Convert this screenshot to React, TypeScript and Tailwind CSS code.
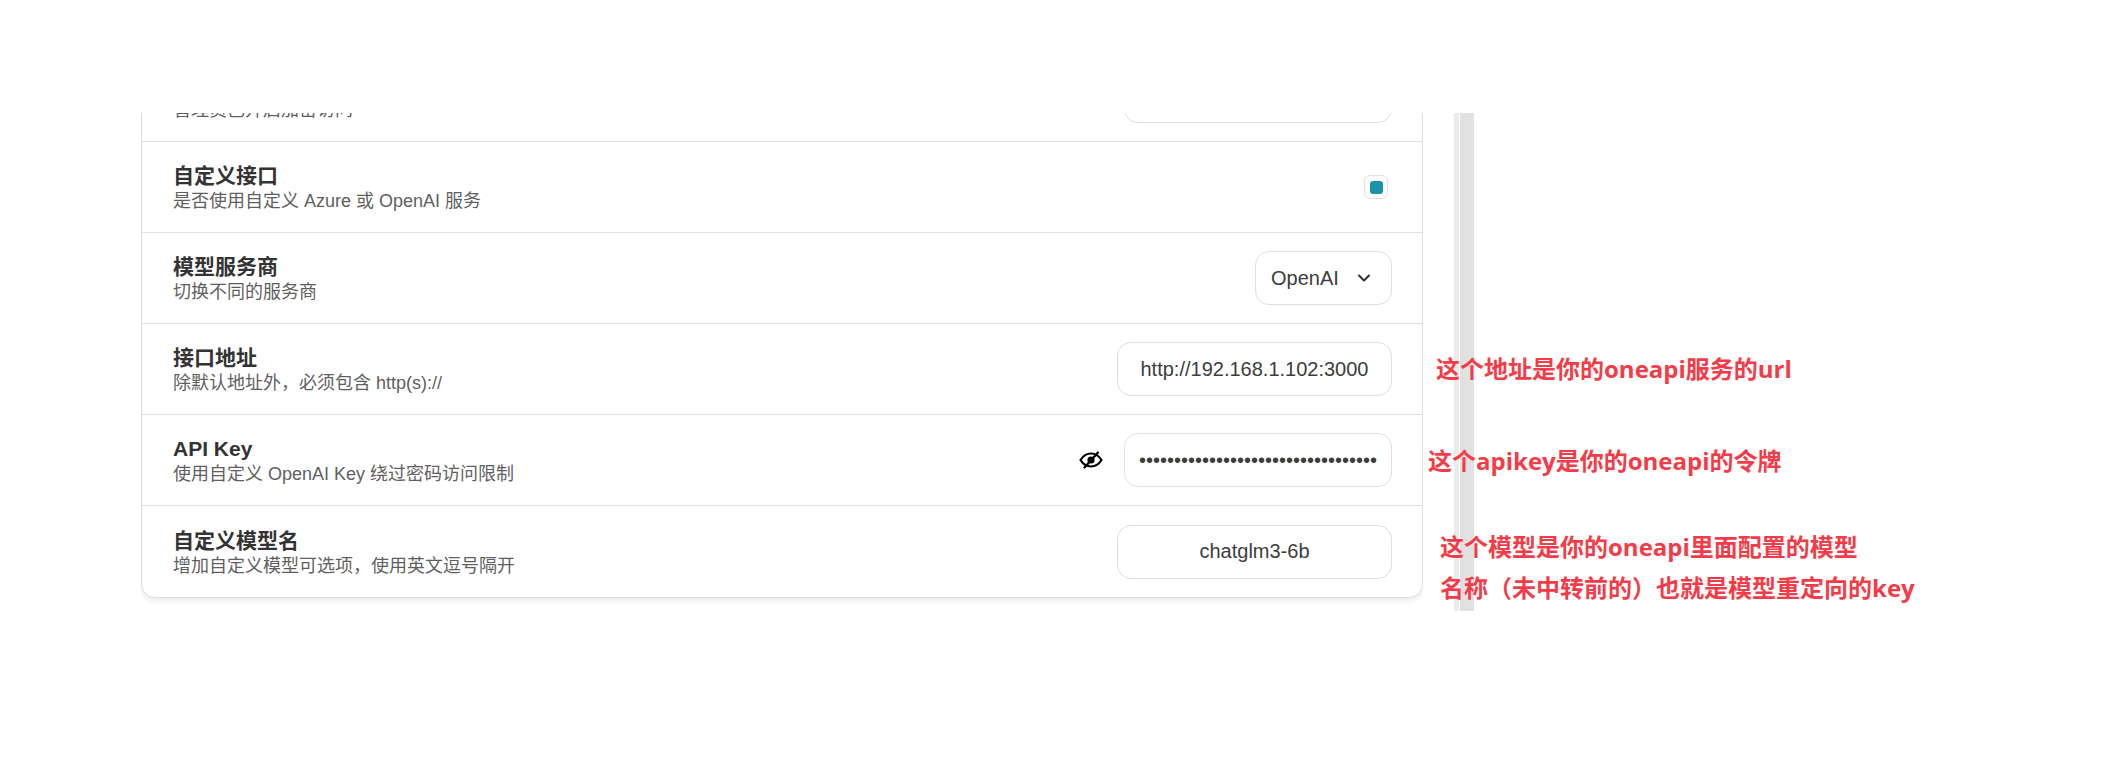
import React from "react";

const sans = "font-['Liberation_Sans','Noto_Sans_CJK_SC',sans-serif]";
const note = "absolute text-[24px] leading-[36px] font-bold text-[#f43c48] whitespace-nowrap font-['Open_Sans','Noto_Sans_CJK_SC',sans-serif]";

function EyeOff() {
  return (
    <svg width="24" height="24" viewBox="0 0 24 24" fill="none" stroke="#000" strokeWidth="2.2" strokeLinecap="round" strokeLinejoin="round">
      <path d="M1.500 12C4 8 7.500 5.500 12 5.500s8 2.500 10.500 6.500c-2.500 4-6 6.500-10.500 6.500S4 16 1.500 12z" />
      <circle cx="12" cy="12" r="2.500" fill="#000" />
      <path d="M5.500 19.500L19 4.500" />
    </svg>
  );
}

function Row({ title, desc, children, last }: { title?: string; desc: string; children?: React.ReactNode; last?: boolean }) {
  return (
    <div className={`h-[91px] flex items-center justify-between pl-[31px] pr-[30px] ${last ? "" : "border-b border-[#dfdfdf]"}`}>
      <div className="flex flex-col pt-[4px]">
        <div className="h-[25px] text-[21px] leading-[24px] font-bold text-[#333333]">{title}</div>
        <div className="text-[18px] leading-[25px] text-[#5f5f5f]">{desc}</div>
      </div>
      {children}
    </div>
  );
}

function Field({ value, w, pad = "px-[16px]", type = "text" }: { value: string; w: string; pad?: string; type?: string }) {
  return (
    <input
      readOnly
      type={type}
      value={value}
      className={`${w} ${pad} h-[54px] rounded-[14px] border border-[#dedede] bg-white text-center text-[20px] text-[#3d3d3d] outline-none ${sans}`}
    />
  );
}

export default function App() {
  return (
    <div className={`relative w-[2119px] h-[766px] bg-white overflow-hidden ${sans}`}>
      <div className="pt-[113px]">
        <div className="h-[498px] overflow-hidden flex">
          <div className="ml-[141px] w-[1282px] h-[498px] overflow-hidden">
            <div className="-mt-[63px] w-[1282px] rounded-[14px] border border-[#dedede] bg-white shadow-[0_2px_6px_rgba(0,0,0,0.10)]">
              <Row desc="管理员已开启加密访问">
                <Field value="" w="w-[268px]" />
              </Row>
              <Row title="自定义接口" desc="是否使用自定义 Azure 或 OpenAI 服务">
                <div className="w-[24px] h-[24px] mr-[4px] rounded-[6px] border border-[#dedede] bg-white flex items-center justify-center">
                  <div className="w-[13px] h-[13px] rounded-[3px] bg-[#1d93ab]" />
                </div>
              </Row>
              <Row title="模型服务商" desc="切换不同的服务商">
                <div className="w-[137px] h-[54px] rounded-[14px] border border-[#dedede] bg-white flex items-center justify-between pl-[15px] pr-[18px] text-[20px] text-[#3d3d3d]">
                  <span>OpenAI</span>
                  <svg width="18" height="18" viewBox="0 0 18 18" fill="none" stroke="#303030" strokeWidth="2" strokeLinecap="round" strokeLinejoin="round">
                    <path d="M4 6.500l5 5 5-5" />
                  </svg>
                </div>
              </Row>
              <Row title="接口地址" desc="除默认地址外，必须包含 http(s)://">
                <Field value="http://192.168.1.102:3000" w="w-[275px]" />
              </Row>
              <Row title="API Key" desc="使用自定义 OpenAI Key 绕过密码访问限制">
                <div className="flex items-center gap-[21px]">
                  <EyeOff />
                  <Field value="sk-0123456789abcdefghijklmnopqrstu" w="w-[268px]" pad="px-[14px]" type="password" />
                </div>
              </Row>
              <Row title="自定义模型名" desc="增加自定义模型可选项，使用英文逗号隔开" last>
                <Field value="chatglm3-6b" w="w-[275px]" />
              </Row>
            </div>
          </div>
          <div className="ml-[31px] w-[5px] bg-[#ebebeb]" />
          <div className="ml-[1px] w-[14px] bg-[#e1e1e1]" />
        </div>
      </div>

      <div className={`${note} left-[1436px] top-[351px]`}>这个地址是你的oneapi服务的url</div>
      <div className={`${note} left-[1428px] top-[443px]`}>这个apikey是你的oneapi的令牌</div>
      <div className={`${note} left-[1440px] top-[529px]`}>这个模型是你的oneapi里面配置的模型</div>
      <div className={`${note} left-[1440px] top-[570px]`}>名称（未中转前的）也就是模型重定向的key</div>
    </div>
  );
}
